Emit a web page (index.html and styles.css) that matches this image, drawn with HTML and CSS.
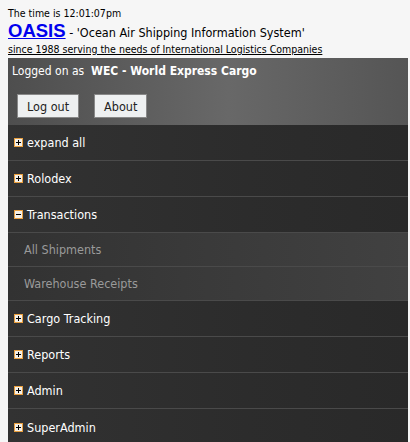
FILE: index.html
```html
<!DOCTYPE html>
<html lang="en">

<head>
    <meta charset="UTF-8">
    <meta name="viewport" content="width=device-width, initial-scale=1.0">
    <title>OASIS</title>
    <link rel="stylesheet" href="styles.css">
</head>

<body>
    <div class="time">The time is 12:01:07pm</div>
    <div class="title">
        <a href="#" class="brand">OASIS</a> - 'Ocean Air Shipping Information System'
    </div>
    <a href="#" class="since">since 1988 serving the needs of International Logistics Companies</a>

    <div class="panel">
        <div class="login">
            <p>Logged on as &nbsp;<b>WEC - World Express Cargo</b></p>
            <div class="buttons">
                <button>Log out</button>
                <button>About</button>
            </div>
        </div>

        <ul class="menu">
            <li class="item"><span class="box plus"></span>expand all</li>
            <li class="item"><span class="box plus"></span>Rolodex</li>
            <li class="item"><span class="box minus"></span>Transactions</li>
            <li class="sub">All Shipments</li>
            <li class="sub">Warehouse Receipts</li>
            <li class="item"><span class="box plus"></span>Cargo Tracking</li>
            <li class="item"><span class="box plus"></span>Reports</li>
            <li class="item"><span class="box plus"></span>Admin</li>
            <li class="item"><span class="box plus"></span>SuperAdmin</li>
        </ul>
    </div>
</body>

</html>
```

FILE: styles.css
```css
* {
    margin: 0;
    padding: 0;
    box-sizing: border-box;
}

body {
    font-family: "DejaVu Sans Condensed", "DejaVu Sans", sans-serif;
    background-color: #f6f6f6;
    color: #000;
    padding: 7px 0 0 8px;
}

.time {
    font-size: 10.5px;
    line-height: 13px;
}

.title {
    font-size: 12.5px;
    line-height: 20px;
    margin-top: 1px;
}

.brand {
    font-family: "Liberation Sans", Arial, sans-serif;
    font-size: 18.5px;
    font-weight: bold;
    color: #0000ee;
}

.since {
    display: block;
    font-size: 10.5px;
    line-height: 13px;
    color: #000;
}

.panel {
    width: 400px;
    margin-top: 2px;
}

.login {
    background: linear-gradient(to right, #4e4e4e 0%, #686868 55%, #555 100%);
    color: #fff;
    padding: 6px 0 0 4px;
    height: 67px;
}

.login p {
    font-size: 12px;
}

.buttons {
    display: flex;
    gap: 15px;
    margin: 16px 0 0 5px;
}

.buttons button {
    font-family: "DejaVu Sans Condensed", "DejaVu Sans", sans-serif;
    font-size: 12.5px;
    color: #222;
    background-color: #eef0f1;
    border: 1px solid #888;
    height: 24px;
    padding: 0 9px;
}

.menu {
    list-style: none;
}

.item,
.sub {
    display: flex;
    align-items: center;
    font-size: 12.5px;
    border-bottom: 1px solid #4a4a4a;
}

.item {
    height: 36px;
    color: #fff;
    padding-left: 6px;
    background: linear-gradient(to right, #323232, #2c2c2c 60%, #292929);
}

.sub {
    height: 34px;
    color: #9a9a9a;
    padding-left: 16px;
    background: linear-gradient(to right, #323232, #3a3a3a 50%, #414141);
}

.item:last-child {
    border-bottom: none;
}

.box {
    position: relative;
    width: 9px;
    height: 9px;
    border: 1px solid #e9a040;
    background-color: #f4f0e8;
    margin-right: 4px;
}

.box::before,
.box::after {
    content: "";
    position: absolute;
    background-color: #000;
}

.box::before {
    left: 1px;
    top: 3px;
    width: 5px;
    height: 1px;
}

.plus::after {
    left: 3px;
    top: 1px;
    width: 1px;
    height: 5px;
}
```
